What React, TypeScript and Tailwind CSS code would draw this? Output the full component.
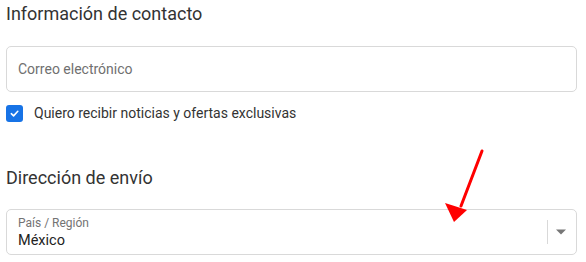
import React from "react";

export default function App() {
  return (
    <div className="relative w-[586px] h-[262px] bg-white overflow-hidden" style={{ fontFamily: "Roboto, 'Liberation Sans', Arial, sans-serif" }}>
      <div className="pl-[6px] pr-[9px]">
        <h2 className="pt-[2px] text-[18px] leading-[24px] text-[#333333] font-normal">Información de contacto</h2>
        <div className="mt-[20px] h-[46px] border border-[#d9d9d9] rounded-[5px] flex items-center px-[11px]">
          <span className="text-[14px] text-[#707070]">Correo electrónico</span>
        </div>
        <div className="mt-[11px] h-[21px] flex items-center gap-[11px]">
          <div className="w-[17px] h-[17px] rounded-[3px] bg-[#1773e6] flex items-center justify-center">
            <svg width="11" height="11" viewBox="0 0 12 12" fill="none">
              <path d="M2.5 6.2 L5 8.6 L9.6 3.6" stroke="white" strokeWidth="1.7" strokeLinecap="round" strokeLinejoin="round" />
            </svg>
          </div>
          <span className="text-[14px] leading-[21px] text-[#333333]">Quiero recibir noticias y ofertas exclusivas</span>
        </div>
        <h2 className="mt-[42px] text-[18px] leading-[24px] text-[#333333] font-normal">Dirección de envío</h2>
        <div className="mt-[19px] h-[46px] border border-[#d9d9d9] rounded-[5px] flex items-center pl-[11px] pr-[10px]">
          <div className="flex-1 self-start pt-[6px] flex flex-col">
            <span className="text-[12px] leading-[14px] text-[#737373]">País / Región</span>
            <span className="mt-[2px] text-[14.5px] leading-[18px] text-[#222222]">México</span>
          </div>
          <div className="w-px h-[24px] bg-[#d9d9d9] mr-[8px]" />
          <svg width="10" height="6" viewBox="0 0 10 6">
            <path d="M0 0.5 H10 L5 5.5 Z" fill="#777777" />
          </svg>
        </div>
      </div>
      <svg className="absolute left-0 top-0 pointer-events-none" width="586" height="262" viewBox="0 0 586 262">
        <line x1="482" y1="151" x2="461" y2="206" stroke="#ff0000" strokeWidth="3" strokeLinecap="round" />
        <polygon points="454,222 445,203 467,210" fill="#ff0000" />
      </svg>
    </div>
  );
}
